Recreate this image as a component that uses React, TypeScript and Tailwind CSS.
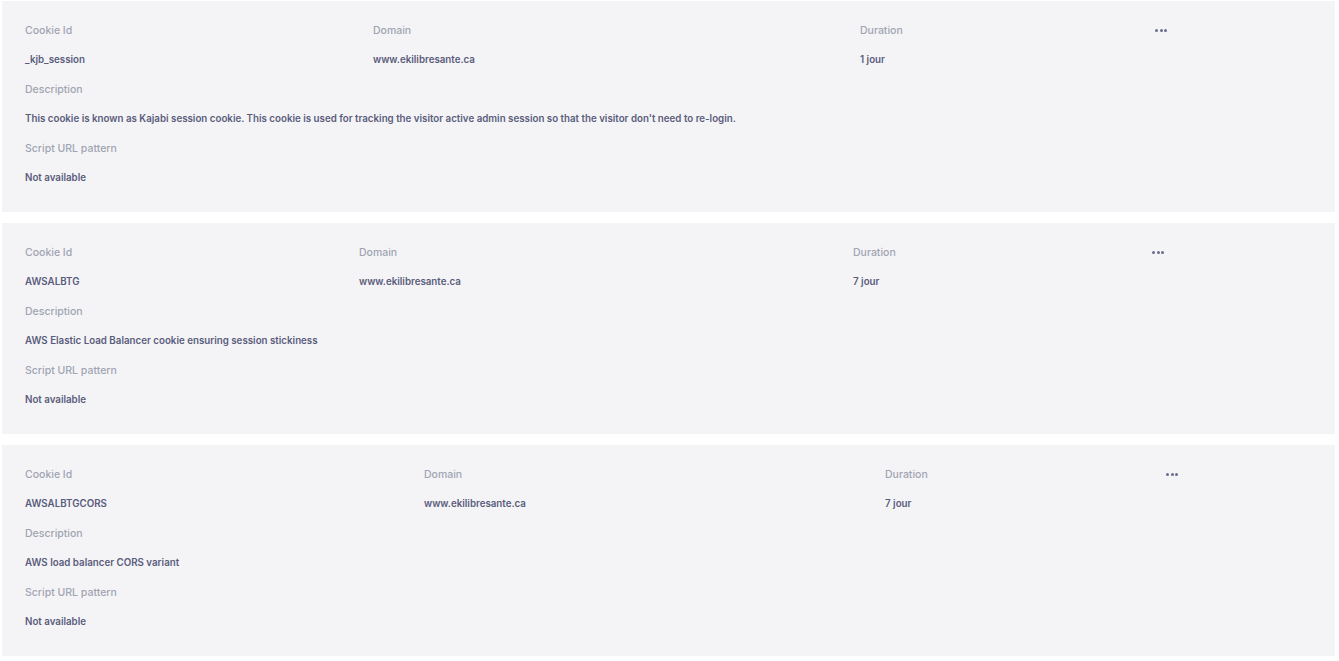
import React from 'react';

interface Cookie {
  id: string;
  domain: string;
  duration: string;
  description: string;
  cols: string;
}

const cookies: Cookie[] = [
  {
    id: '_kjb_session',
    domain: 'www.ekilibresante.ca',
    duration: '1 jour',
    description:
      "This cookie is known as Kajabi session cookie. This cookie is used for tracking the visitor active admin session so that the visitor don't need to re-login.",
    cols: 'grid-cols-[348px_487px_295px_1fr]',
  },
  {
    id: 'AWSALBTG',
    domain: 'www.ekilibresante.ca',
    duration: '7 jour',
    description: 'AWS Elastic Load Balancer cookie ensuring session stickiness',
    cols: 'grid-cols-[334px_494px_299px_1fr]',
  },
  {
    id: 'AWSALBTGCORS',
    domain: 'www.ekilibresante.ca',
    duration: '7 jour',
    description: 'AWS load balancer CORS variant',
    cols: 'grid-cols-[399px_461px_281px_1fr]',
  },
];

const Label = ({ children }: { children: React.ReactNode }) => (
  <div className="h-[29.5px] flex items-center text-[10.5px] text-[#a0a4b1] font-medium">{children}</div>
);

const Value = ({ children }: { children: React.ReactNode }) => (
  <div className="h-[29.5px] flex items-center text-[9.75px] text-[#5a5c7b] font-semibold whitespace-nowrap">{children}</div>
);

const Dots = () => (
  <div className="h-[29.5px] flex items-center gap-[1.5px]">
    <span className="w-[3px] h-[3px] rounded-full bg-[#6b6d8a]" />
    <span className="w-[3px] h-[3px] rounded-full bg-[#6b6d8a]" />
    <span className="w-[3px] h-[3px] rounded-full bg-[#6b6d8a]" />
  </div>
);

const CookieCard = ({ cookie }: { cookie: Cookie }) => (
  <div className="bg-[#f4f4f7] h-[211px] pt-[15px] pl-[23px]">
    <div className={`grid ${cookie.cols}`}>
      <Label>Cookie Id</Label>
      <Label>Domain</Label>
      <Label>Duration</Label>
      <Dots />
      <Value>{cookie.id}</Value>
      <Value>{cookie.domain}</Value>
      <Value>{cookie.duration}</Value>
      <div />
    </div>
    <Label>Description</Label>
    <Value>{cookie.description}</Value>
    <Label>Script URL pattern</Label>
    <Value>Not available</Value>
  </div>
);

export default function App() {
  return (
    <div className="w-[1339px] h-[661px] bg-white pt-[1px] pl-[2px] pr-[4px] flex flex-col gap-[11px] font-['Inter',sans-serif]">
      {cookies.map((c) => (
        <CookieCard key={c.id} cookie={c} />
      ))}
    </div>
  );
}
